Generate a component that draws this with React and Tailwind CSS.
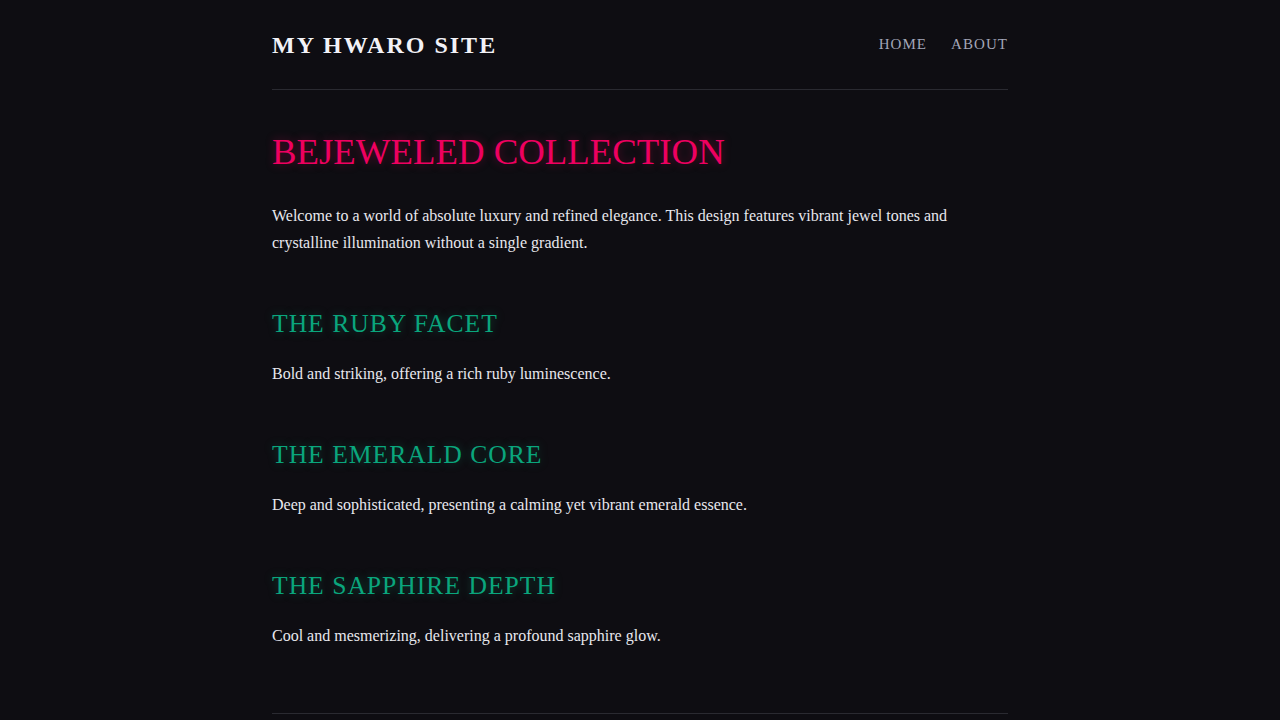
import React from "react";

const sections = [
  {
    title: "The Ruby Facet",
    text: "Bold and striking, offering a rich ruby luminescence.",
  },
  {
    title: "The Emerald Core",
    text: "Deep and sophisticated, presenting a calming yet vibrant emerald essence.",
  },
  {
    title: "The Sapphire Depth",
    text: "Cool and mesmerizing, delivering a profound sapphire glow.",
  },
];

const App = () => {
  return (
    <div className="min-h-screen bg-[#0e0d12] font-['Liberation_Serif','Times_New_Roman',serif] text-[#e8e8ee]">
      <div className="mx-auto w-[736px]">
        <header className="flex h-[90px] items-center justify-between border-b border-[#2a2a31]">
          <a className="text-[24px] font-bold leading-8 tracking-[2px] text-[#f2f2f7]">
            MY HWARO SITE
          </a>
          <nav className="flex gap-[24px] text-[15px] uppercase tracking-[0.07em] text-[#a3a6b8]">
            <a>Home</a>
            <a>About</a>
          </nav>
        </header>

        <main className="pb-[64px]">
          <h1 className="mt-[39.5px] mb-[28.5px] text-[36.8px] leading-[44px] uppercase text-[#ee0060] [text-shadow:0_0_10px_rgba(238,0,96,0.35)]">
            Bejeweled Collection
          </h1>
          <p className="text-[16px] leading-[27px]">
            Welcome to a world of absolute luxury and refined elegance. This design features vibrant jewel tones and
            crystalline illumination without a single gradient.
          </p>

          {sections.map((section) => (
            <section key={section.title} className="mt-[49.5px]">
              <h2 className="mb-[19.5px] text-[25.6px] leading-[35px] uppercase tracking-[1px] text-[#0aa67d] [text-shadow:0_0_10px_rgba(16,185,129,0.35)]">
                {section.title}
              </h2>
              <p className="text-[16px] leading-[27px]">{section.text}</p>
            </section>
          ))}
        </main>

        <footer className="h-[10px] border-t border-[#2a2a31]" />
      </div>
    </div>
  );
};

export default App;
